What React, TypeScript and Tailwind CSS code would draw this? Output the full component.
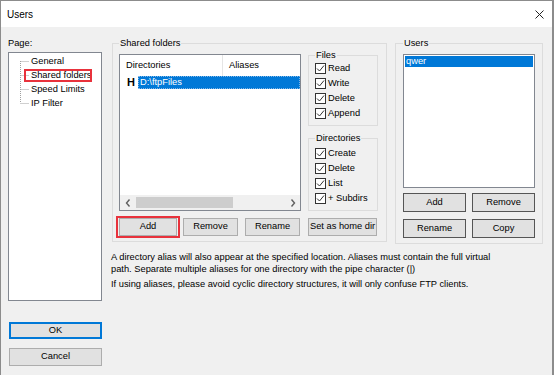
import React from "react";

const fileRights = ["Read", "Write", "Delete", "Append"];
const dirRights = ["Create", "Delete", "List", "+ Subdirs"];

function CheckRow({ label }: { label: string }) {
  return (
    <div className="flex h-[15px] items-center">
      <span className="flex h-[11px] w-[11px] items-center justify-center border border-[#333333] bg-white">
        <svg width="9" height="9" viewBox="0 0 9 9">
          <path d="M1 4.5 L3.5 7 L8 1.5" fill="none" stroke="#333333" strokeWidth="1" />
        </svg>
      </span>
      <span className="ml-[2px]">{label}</span>
    </div>
  );
}

function Btn({
  children,
  className = "",
}: {
  children: React.ReactNode;
  className?: string;
}) {
  return (
    <button
      type="button"
      className={`flex items-center justify-center border bg-[#e1e1e1] leading-none text-black ${className}`}
    >
      {children}
    </button>
  );
}

function Chevron({ dir }: { dir: "left" | "right" }) {
  return (
    <svg width="6" height="8" viewBox="0 0 6 8">
      <path
        d={dir === "left" ? "M4.5 0.5 L1.5 4 L4.5 7.5" : "M1.5 0.5 L4.5 4 L1.5 7.5"}
        fill="none"
        stroke="#606060"
        strokeWidth="1.4"
      />
    </svg>
  );
}

export default function App() {
  return (
    <div className="h-[375px] w-[554px] overflow-hidden border-l border-t border-r-2 border-[#8c8c8c] bg-[#f0f0f0] font-['Liberation_Sans',Arial,sans-serif] text-[9.3px] text-black">
      {/* Title bar */}
      <div className="flex h-[26px] items-center justify-between bg-white pl-[6px] pr-[8px]">
        <span className="text-[10px]">Users</span>
        <svg width="9" height="9" viewBox="0 0 9 9">
          <path d="M0.5 0.5 L8.5 8.5 M8.5 0.5 L0.5 8.5" stroke="#222222" strokeWidth="1" />
        </svg>
      </div>

      <div className="flex">
        {/* Left column */}
        <div className="ml-[7px] flex w-[94px] flex-col pt-[10px]">
          <div className="leading-[12px]">Page:</div>
          <div className="mt-[3px] h-[249px] border border-[#828790] bg-white pl-[11px] pt-[1px]">
            <div className="flex">
              <svg width="9" height="56" viewBox="0 0 9 56" className="shrink-0">
                <g stroke="#a0a0a0" strokeWidth="1" strokeDasharray="1 1" fill="none">
                  <path d="M0.5 7 V49" />
                  <path d="M0.5 7.5 H9 M0.5 21.5 H9 M0.5 35.5 H9 M0.5 49.5 H9" />
                </g>
              </svg>
              <div className="ml-[2px] flex flex-col">
                <span className="h-[14px] leading-[14px]">General</span>
                <span className="relative h-[14px] leading-[14px]">
                  Shared folders
                  <span className="absolute -left-[7px] -right-[1px] bottom-0 top-[1px] border-2 border-[#e8323c]" />
                </span>
                <span className="h-[14px] leading-[14px]">Speed Limits</span>
                <span className="h-[14px] leading-[14px]">IP Filter</span>
              </div>
            </div>
          </div>
          <Btn className="ml-[1px] mt-[21px] h-[17px] w-[93px] border-2 border-[#0078d7]">OK</Btn>
          <Btn className="ml-[1px] mt-[9px] h-[18px] w-[93px] border-[#adadad]">Cancel</Btn>
        </div>

        {/* Right area */}
        <div className="ml-[10px] flex flex-col pt-[10px]">
          <div className="flex items-start gap-[8px]">
            {/* Shared folders */}
            <fieldset className="w-[275px] border border-[#dcdcdc] px-[6px] pb-[5px]">
              <legend className="px-[1px] leading-[12px]">Shared folders</legend>
              <div className="flex gap-[7px]">
                <div className="mt-[5px] flex h-[157px] w-[182px] flex-col border border-[#828790] bg-white">
                  <div className="flex h-[21px] items-center">
                    <div className="flex h-full w-[103px] items-center border-r border-[#e5e5e5] pl-[6px]">
                      Directories
                    </div>
                    <div className="pl-[6px]">Aliases</div>
                  </div>
                  <div className="flex h-[13px] items-center">
                    <span className="ml-[7px] w-[11px] text-[11px] font-bold leading-none">H</span>
                    <div className="flex h-full flex-1 items-center border border-dotted border-[#7fb6e8] bg-[#0078d7] pl-[1px] text-white">
                      D:\ftpFiles
                    </div>
                  </div>
                  <div className="flex-1" />
                  <div className="flex h-[15px] items-center bg-[#f0f0f0]">
                    <div className="flex h-full w-[15px] items-center justify-center">
                      <Chevron dir="left" />
                    </div>
                    <div className="ml-[1px] h-[11px] w-[97px] bg-[#cdcdcd]" />
                    <div className="flex-1" />
                    <div className="flex h-full w-[15px] items-center justify-center">
                      <Chevron dir="right" />
                    </div>
                  </div>
                </div>

                <div className="flex w-[70px] flex-col">
                  <fieldset className="border border-[#dcdcdc] px-[6px] pb-[4px]">
                    <legend className="px-[1px] leading-[12px]">Files</legend>
                    {fileRights.map((r) => (
                      <CheckRow key={r} label={r} />
                    ))}
                  </fieldset>
                  <fieldset className="mt-[6px] border border-[#dcdcdc] px-[6px] pb-[4px] pt-[2px]">
                    <legend className="px-[1px] leading-[12px]">Directories</legend>
                    {dirRights.map((r) => (
                      <CheckRow key={r} label={r} />
                    ))}
                  </fieldset>
                </div>
              </div>

              <div className="mt-[7px] flex">
                <span className="relative">
                  <Btn className="h-[18px] w-[58px] border-[#adadad]">Add</Btn>
                  <span className="absolute -bottom-[2px] -left-[3px] -right-[3px] -top-[2px] border-2 border-[#e8323c]" />
                </span>
                <Btn className="ml-[6px] h-[18px] w-[55px] border-[#adadad]">Remove</Btn>
                <Btn className="ml-[7px] h-[18px] w-[55px] border-[#adadad]">Rename</Btn>
                <Btn className="ml-[8px] h-[18px] w-[69px] border-[#adadad]">Set as home dir</Btn>
              </div>
            </fieldset>

            {/* Users */}
            <fieldset className="w-[148px] border border-[#dcdcdc] px-[7px] pb-[5px]">
              <legend className="px-[1px] leading-[12px]">Users</legend>
              <div className="mt-[5px] h-[134px] border border-[#828790] bg-white px-[1px] pt-[1px]">
                <div className="h-[11px] bg-[#0078d7] pl-[1px] leading-[11px] text-white">qwer</div>
              </div>
              <div className="mt-[5px] grid grid-cols-2 gap-x-[6px] gap-y-[7px]">
                <Btn className="h-[19px] border-[#555555]">Add</Btn>
                <Btn className="h-[19px] border-[#555555]">Remove</Btn>
                <Btn className="h-[19px] border-[#555555]">Rename</Btn>
                <Btn className="h-[19px] border-[#555555]">Copy</Btn>
              </div>
            </fieldset>
          </div>

          <p className="-ml-[1px] mt-[7px] leading-[12px]">
            A directory alias will also appear at the specified location. Aliases must contain the full virtual
            <br />
            path. Separate multiple aliases for one directory with the pipe character (|)
          </p>
          <p className="-ml-[1px] mt-[3px] leading-[12px]">
            If using aliases, please avoid cyclic directory structures, it will only confuse FTP clients.
          </p>
        </div>
      </div>
    </div>
  );
}
